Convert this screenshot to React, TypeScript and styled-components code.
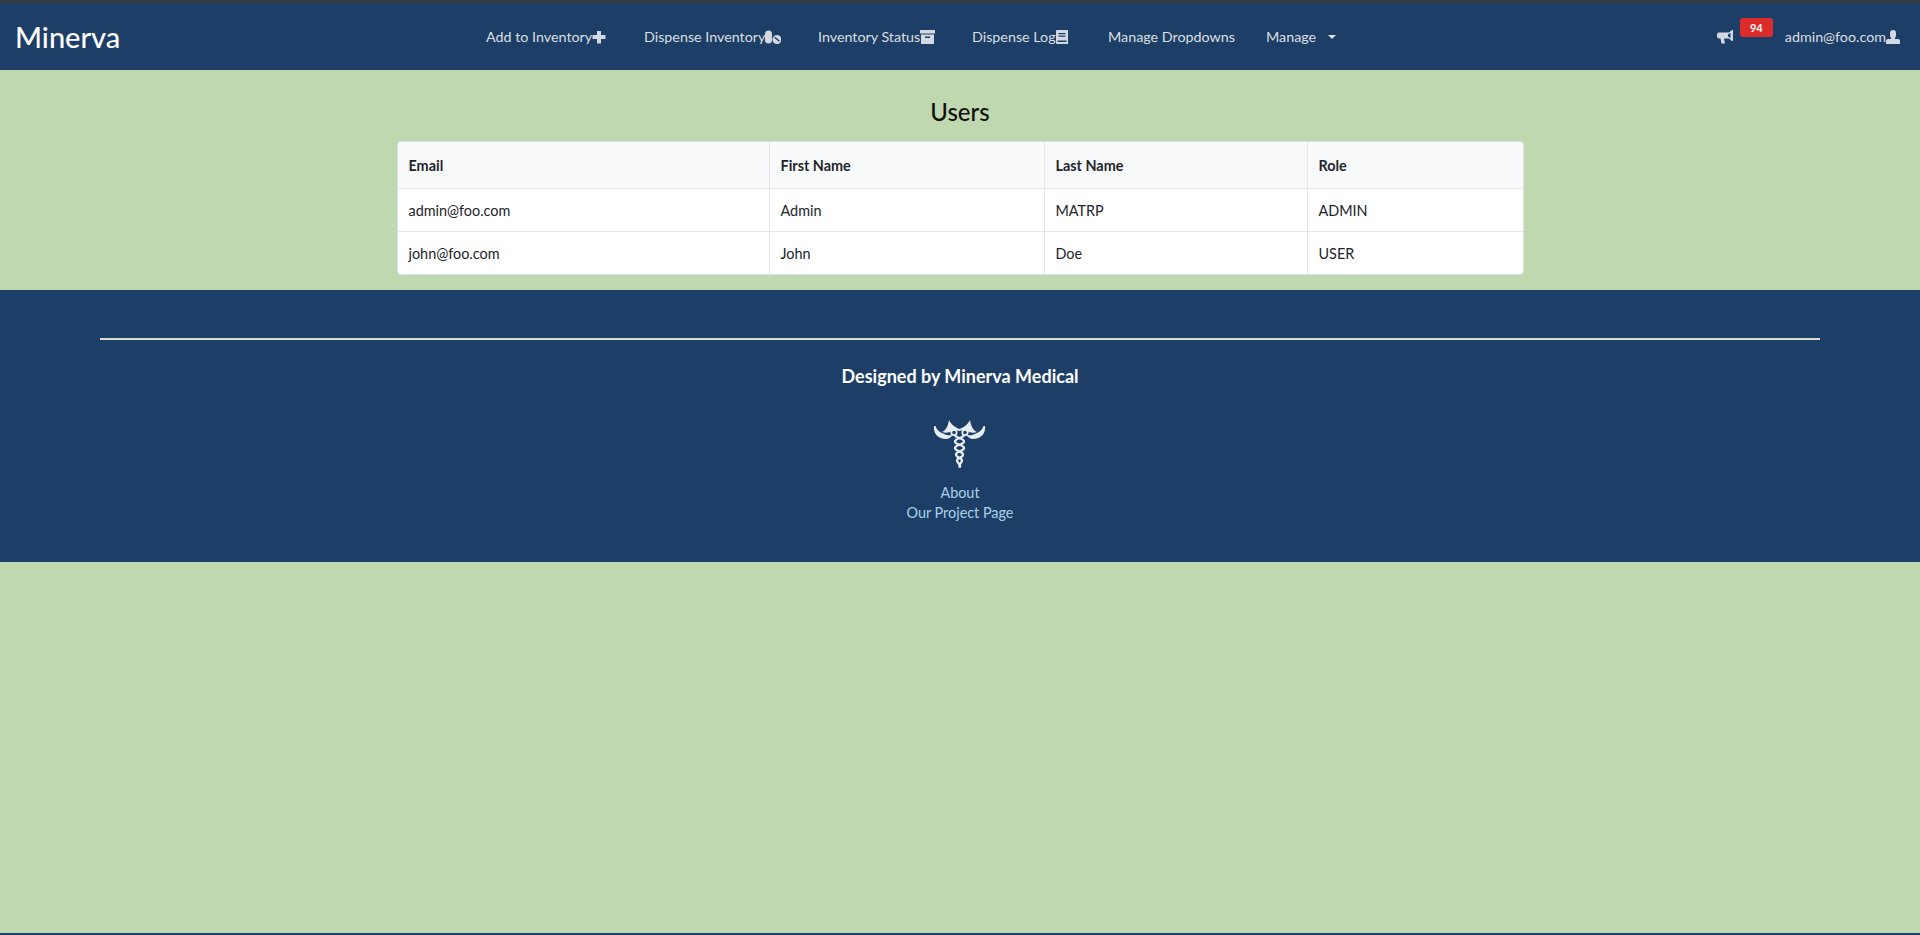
import React from "react";
import styled, { createGlobalStyle } from "styled-components";

const Global = createGlobalStyle`
  html, body { margin: 0; padding: 0; height: 100%; }
  body { background: #c0d8af; font-family: Lato, "Liberation Sans", sans-serif; color: #212529; }
`;
const Page = styled.div`
  min-height: 935px; display: flex; flex-direction: column; overflow: hidden; box-sizing: border-box;
  border-top: 3px solid #343a40; border-bottom: 2px solid #1d3f6e;
`;
const Navbar = styled.nav`
  height: 67px; background: #1d3e66; display: flex; align-items: center; box-sizing: border-box; padding: 0 20px 0 15px;
  flex: none;
`;
const Brand = styled.a`
  font-size: 29px; font-weight: 500; color: #fff; width: 471px; flex: none; line-height: 36px;
`;
const NavList = styled.div`
  display: flex; align-items: center; flex: 1; font-size: 14.3px;
`;
const NavItem = styled.a<{ $w: number }>`
  color: rgba(255,255,255,.85); width: ${p => p.$w}px; flex: none; display: flex; align-items: center; white-space: nowrap;
`;
const Glyph = styled.svg<{ $w: number }>`
  width: ${p => p.$w}px; height: 14px; fill: #d3d9e3; flex: none; display: block;
`;
const Caret = styled.span`
  width: 0; height: 0; border-left: 4px solid transparent; border-right: 4px solid transparent; border-top: 4px solid #dfe4ea; margin-left: 12px;
`;
const Right = styled.div`
  display: flex; align-items: center; font-size: 14.3px; color: rgba(255,255,255,.85);
`;
const Horn = styled.span`
  display: flex; margin-right: 52px; position: relative;
`;
const Badge = styled.span`
  position: absolute; left: 23px; top: -12px; width: 33px; height: 19px; border-radius: 3px; background: #dc2b2b; color: #fff;
  font-size: 11px; font-weight: 700; display: flex; align-items: center; justify-content: center;
`;
const Main = styled.main`
  height: 220px; flex: none; display: flex; flex-direction: column; align-items: center;
`;
const Title = styled.h2`
  margin: 26px 0 14px; font-size: 24px; font-weight: 500; line-height: 31px; color: #111;
`;
const TableCard = styled.table`
  width: 1127px; height: 134px; border-collapse: separate; border-spacing: 0; background: #fff; border: 1px solid #dfe2e5; border-radius: 4px;
  table-layout: fixed; font-size: 14.4px; overflow: hidden;
`;
const Th = styled.th`
  background: #f8f9fb; text-align: left; padding: 0 11px; height: 47px; font-weight: 700; color: #212529;
  border-right: 1px solid #e5e8eb; border-bottom: 1px solid #e5e8eb; box-sizing: border-box;
  &:last-child { border-right: 0; }
`;
const Td = styled.td`
  padding: 0 11px; height: 43px; box-sizing: border-box; color: #212529;
  border-right: 1px solid #e5e8eb; border-bottom: 1px solid #e5e8eb;
  &:last-child { border-right: 0; }
  tr:last-child & { border-bottom: 0; height: 42px; }
`;
const Footer = styled.footer`
  height: 272px; flex: none; background: #1d3e66; box-sizing: border-box; padding: 48px 100px 0; display: flex; flex-direction: column; align-items: center; color: #fff;
`;
const Rule = styled.hr`
  width: 100%; margin: 0; border: 0; height: 2px; background: #dcdccc;
`;
const Designed = styled.h5`
  margin: 23px 0 0; font-size: 18px; font-weight: 700; line-height: 26px; color: #fff;
`;
const Logo = styled.svg`
  display: block; margin-top: 26px; width: 70px; height: 60px; filter: blur(0.5px);
`;
const FootLink = styled.a`
  color: #a8d3e8; font-size: 14.4px; line-height: 20px;
  &:first-of-type { margin-top: 8px; }
`;

const cols = [372, 275, 263, 215];
const rows = [
  ["admin@foo.com", "Admin", "MATRP", "ADMIN"],
  ["john@foo.com", "John", "Doe", "USER"],
];

const PlusIcon = () => (
  <Glyph $w={14} viewBox="0 0 14 14"><path d="M5 1h4v4h4.500v4H9v4.500H5V9H.5V5H5z" /></Glyph>
);
const PillsIcon = () => (
  <Glyph $w={16} viewBox="0 0 16 14">
    <path d="M0 4a3.500 3.500 0 0 1 7 0v6a3.500 3.500 0 0 1-7 0z" />
    <path d="M12 5a4.500 4.500 0 1 1-.01 0zM9.200 7.800l4.800 4 .9-1-4.800-4z" fillRule="evenodd" />
  </Glyph>
);
const ArchiveIcon = () => (
  <Glyph $w={15} viewBox="0 0 15 14">
    <path d="M0 0h15v3.500H0zM1 4.500h13V14H1zM5 6.500v1.500h5V6.500z" fillRule="evenodd" />
  </Glyph>
);
const BookIcon = () => (
  <Glyph $w={12} viewBox="0 0 12 14">
    <path d="M1 0h11v14H1a1 1 0 0 1-1-1V1a1 1 0 0 1 1-1zM2.500 3v1.200h7V3zM2.500 5.500v1.200h7V5.500zM1.500 10.500v1.500h9v-1.500z" fillRule="evenodd" />
  </Glyph>
);
const HornIcon = () => (
  <Glyph $w={16} viewBox="0 0 16 14">
    <path d="M15 0h1v11h-1l-3-2.500H7L8 13.500H4.500L3.500 8.500H2A2 2 0 0 1 0 6.500V4.500a2 2 0 0 1 2-2h10zM13.500 3 11 4.500V6.500l2.500 1.500z" fillRule="evenodd" />
  </Glyph>
);
const UserIcon = () => (
  <Glyph $w={14} viewBox="0 0 14 14">
    <path d="M4 3a3 3 0 0 1 6 0v2.500c0 1-.5 1.800-1 2.300v1.200h3a2 2 0 0 1 2 2v3H0v-3a2 2 0 0 1 2-2h3V7.800c-.5-.5-1-1.300-1-2.300z" />
  </Glyph>
);

export default function App() {
  return (
    <Page>
      <Global />
      <Navbar>
        <Brand>Minerva</Brand>
        <NavList>
          <NavItem $w={158}>Add to Inventory<PlusIcon /></NavItem>
          <NavItem $w={174}>Dispense Inventory<PillsIcon /></NavItem>
          <NavItem $w={154}>Inventory Status<ArchiveIcon /></NavItem>
          <NavItem $w={136}>Dispense Log<BookIcon /></NavItem>
          <NavItem $w={158}>Manage Dropdowns</NavItem>
          <NavItem $w={100}>Manage<Caret /></NavItem>
        </NavList>
        <Right>
          <Horn><HornIcon /><Badge>94</Badge></Horn>
          admin@foo.com<UserIcon />
        </Right>
      </Navbar>
      <Main>
        <Title>Users</Title>
        <TableCard>
          <colgroup>{cols.map((c, i) => <col key={i} style={{ width: c }} />)}</colgroup>
          <thead><tr><Th>Email</Th><Th>First Name</Th><Th>Last Name</Th><Th>Role</Th></tr></thead>
          <tbody>
            {rows.map((r, i) => <tr key={i}>{r.map((c, j) => <Td key={j}>{c}</Td>)}</tr>)}
          </tbody>
        </TableCard>
      </Main>
      <Footer>
        <Rule />
        <Designed>Designed by Minerva Medical</Designed>
        <Logo viewBox="0 0 70 60" fill="none" stroke="#e8edf2">
          <path d="M9 11C8 18 13 24 21 24c3 0 5-2 7-4-3 .3-5 .3-7-.3C16 18 12 16 10.500 11z" fill="#e8edf2" stroke="none" />
          <path d="M60 11C61 18 56 24 48 24c-3 0-5-2-7-4 3 .3 5 .3 7-.3C53 18 57 16 58.500 11z" fill="#e8edf2" stroke="none" />
          <path d="M17 17c3-1 6-5 7-12 2 4 5 7 10.500 9C40 12 43 9 45 5c1 7 4 11 7 12-3 1-7 1-10-1-2-1-5-1-7.500 0-2.500-1-5.500-1-7.500 0-3 2-7 2-10 1z" fill="#e8edf2" stroke="none" />
          <circle cx="29" cy="17.500" r="2.700" strokeWidth="1.800" />
          <circle cx="40" cy="17.500" r="2.700" strokeWidth="1.800" />
          <path d="M30 20c0 3 9 3 9 6.500s-9 3-9 6.500 8 3 8 6.500-6 3-6 6 4 2.500 3 7" strokeWidth="2.300" />
          <path d="M39 20c0 3-9 3-9 6.500s9 3 9 6.500-8 3-8 6.500 6 3 6 6-4 2.500-2 7" strokeWidth="2.300" />
        </Logo>
        <FootLink>About</FootLink>
        <FootLink>Our Project Page</FootLink>
      </Footer>
    </Page>
  );
}
